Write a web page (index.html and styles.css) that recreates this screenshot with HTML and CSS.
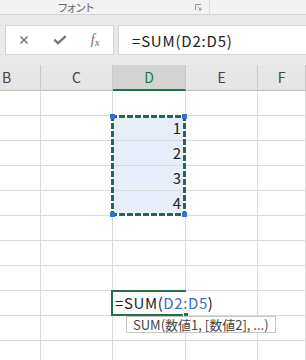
FILE: index.html
```html
<!DOCTYPE html>
<html lang="ja">
<head>
    <meta charset="UTF-8">
    <title>SUM</title>
    <link rel="stylesheet" href="styles.css">
</head>
<body>
    <div class="ribbon">
        <div class="group">
            <span class="group-label">フォント</span>
            <span class="launcher">
                <svg width="7" height="7" viewBox="0 0 7 7">
                    <path d="M0.5 6V0.5H6" fill="none" stroke="#9a9a9a" stroke-width="1"/>
                    <path d="M2.5 2.5L6 6M3.5 6H6V3.5" fill="none" stroke="#9a9a9a" stroke-width="1"/>
                </svg>
            </span>
        </div>
    </div>

    <div class="formula-bar">
        <div class="fx-buttons">
            <span class="btn">
                <svg width="10" height="10" viewBox="0 0 10 10">
                    <path d="M1.5 1.5L8.5 8.5M8.5 1.5L1.5 8.5" stroke="#6f6f6f" stroke-width="1.4"/>
                </svg>
            </span>
            <span class="btn">
                <svg width="14" height="10" viewBox="0 0 14 10">
                    <path d="M1.2 4.6L5 8.2L12.8 1.2" fill="none" stroke="#767676" stroke-width="2.3"/>
                </svg>
            </span>
            <span class="btn fx"><i>f</i><span class="fx-x">x</span></span>
        </div>
        <div class="formula-input">=SUM(D2:D5)</div>
    </div>

    <div class="sheet">
        <div class="head col-b">B</div>
        <div class="head">C</div>
        <div class="head current">D</div>
        <div class="head">E</div>
        <div class="head">F</div>

        <div class="cell"></div><div class="cell"></div><div class="cell"></div><div class="cell"></div><div class="cell"></div>
        <div class="cell"></div><div class="cell"></div><div class="cell num">1</div><div class="cell"></div><div class="cell"></div>
        <div class="cell"></div><div class="cell"></div><div class="cell num">2</div><div class="cell"></div><div class="cell"></div>
        <div class="cell"></div><div class="cell"></div><div class="cell num">3</div><div class="cell"></div><div class="cell"></div>
        <div class="cell"></div><div class="cell"></div><div class="cell num">4</div><div class="cell"></div><div class="cell"></div>
        <div class="cell"></div><div class="cell"></div><div class="cell"></div><div class="cell"></div><div class="cell"></div>
        <div class="cell"></div><div class="cell"></div><div class="cell"></div><div class="cell"></div><div class="cell"></div>
        <div class="cell"></div><div class="cell"></div><div class="cell"></div><div class="cell"></div><div class="cell"></div>
        <div class="cell"></div><div class="cell"></div><div class="cell"></div><div class="cell"></div><div class="cell"></div>
        <div class="cell"></div><div class="cell"></div><div class="cell"></div><div class="cell"></div><div class="cell"></div>
        <div class="cell"></div><div class="cell"></div><div class="cell"></div><div class="cell"></div><div class="cell"></div>

        <!-- copy range D2:D5 -->
        <div class="ants">
            <i class="handle tl"></i><i class="handle tr"></i>
            <i class="handle bl"></i><i class="handle br"></i>
        </div>

        <!-- cell being edited -->
        <div class="editor">
            <span class="editor-text">=SUM(<span class="ref">D2:D5</span>)</span>
            <i class="fill-handle"></i>
            <div class="tip">SUM(数値1, [数値2], ...)</div>
        </div>
    </div>
</body>
</html>
```

FILE: styles.css
```css
* {
    box-sizing: border-box;
}
body {
    margin: 0;
    width: 306px;
    height: 360px;
    overflow: hidden;
    background-color: #fff;
    font-family: "Noto Sans CJK JP", "Noto Sans", sans-serif;
    color: #222;
}

/* ribbon */
.ribbon {
    height: 15px;
    background-color: #f3f3f3;
    border-bottom: 1px solid #d5d5d5;
    display: flex;
}
.group {
    width: 210px;
    border-right: 1px solid #dcdcdc;
    display: flex;
    align-items: flex-start;
}
.group-label {
    margin-left: 58px;
    font-size: 11px;
    line-height: 14px;
    color: #666;
    font-feature-settings: "palt";
}
.launcher {
    margin-left: auto;
    margin-right: 7px;
    margin-top: 4px;
    display: flex;
}

/* formula bar */
.formula-bar {
    height: 50px;
    padding: 10px 0 10px 5px;
    background-color: #e9e9e9;
    display: flex;
    gap: 4px;
}
.fx-buttons {
    width: 109px;
    background-color: #fff;
    border: 1px solid #d4d4d4;
    display: flex;
    align-items: center;
}
.btn {
    width: 36px;
    display: flex;
    justify-content: center;
    align-items: center;
}
.fx {
    font-family: "Liberation Serif", serif;
    color: #6f6f6f;
    font-size: 14px;
}
.fx-x {
    font-style: italic;
    font-size: 11px;
    margin-top: 3px;
}
.formula-input {
    flex: 1;
    margin-right: -10px;
    background-color: #fff;
    border: 1px solid #d4d4d4;
    padding-left: 13px;
    font-size: 15px;
    letter-spacing: 0.8px;
    display: flex;
    align-items: center;
}

/* sheet */
.sheet {
    position: relative;
    display: grid;
    grid-template-columns: 41px 72px 73px 72px 1fr;
    grid-template-rows: 26px;
    grid-auto-rows: 25px;
}
.head {
    background-color: #e6e6e6;
    border-right: 1px solid #c9c9c9;
    border-bottom: 1px solid #bdbdbd;
    font-size: 14px;
    line-height: 25px;
    text-align: center;
    color: #444;
}
.head.col-b {
    text-align: left;
    padding-left: 2px;
}
.head.current {
    background-color: #d3d3d3;
    color: #217346;
    border-bottom: 2px solid #217346;
}
.cell {
    border-right: 1px solid #dadada;
    border-bottom: 1px solid #dadada;
    font-size: 15px;
    line-height: 24px;
    padding: 0 4px;
}
.num {
    text-align: right;
    background-color: #e8eef9;
}

.ants {
    position: absolute;
    grid-column: 3 / 4;
    grid-row: 3 / 7;
    top: -1px;
    left: -2px;
    right: 0;
    bottom: 0;
    background:
        repeating-linear-gradient(90deg, #1f6b56 0 6px, #fff 6px 8px) top left / 100% 3px no-repeat,
        repeating-linear-gradient(90deg, #1f6b56 0 6px, #fff 6px 8px) bottom left / 100% 3px no-repeat,
        repeating-linear-gradient(180deg, #1f6b56 0 6px, #fff 6px 8px) top left / 3px 100% no-repeat,
        repeating-linear-gradient(180deg, #1f6b56 0 6px, #fff 6px 8px) top right / 3px 100% no-repeat;
}
.handle {
    position: absolute;
    width: 5px;
    height: 5px;
    background-color: #3d70c8;
}
.handle.tl { top: -1px; left: -1px; }
.handle.tr { top: -1px; right: -1px; }
.handle.bl { bottom: -1px; left: -1px; }
.handle.br { bottom: -1px; right: -1px; }

.editor {
    position: absolute;
    grid-column: 3 / 4;
    grid-row: 10 / 11;
    top: -1px;
    left: -2px;
    right: 0;
    bottom: 0;
    background-color: #fff;
    border: 2px solid #217346;
    border-right: none;
    display: flex;
    align-items: center;
}
.editor-text {
    padding-left: 2px;
    padding-right: 2px;
    background-color: #fff;
    white-space: nowrap;
    font-size: 15px;
    letter-spacing: 0.6px;
    line-height: 20px;
    position: relative;
}
.ref {
    color: #3d6fc1;
}
.fill-handle {
    position: absolute;
    right: -3px;
    bottom: -4px;
    width: 6px;
    height: 6px;
    background-color: #217346;
    border: 1px solid #fff;
}
.tip {
    position: absolute;
    left: 13px;
    top: 24px;
    padding: 0 6px;
    background-color: #fff;
    border: 1px solid #c6c6c6;
    font-size: 13px;
    line-height: 15px;
    color: #444;
    white-space: nowrap;
}
```
